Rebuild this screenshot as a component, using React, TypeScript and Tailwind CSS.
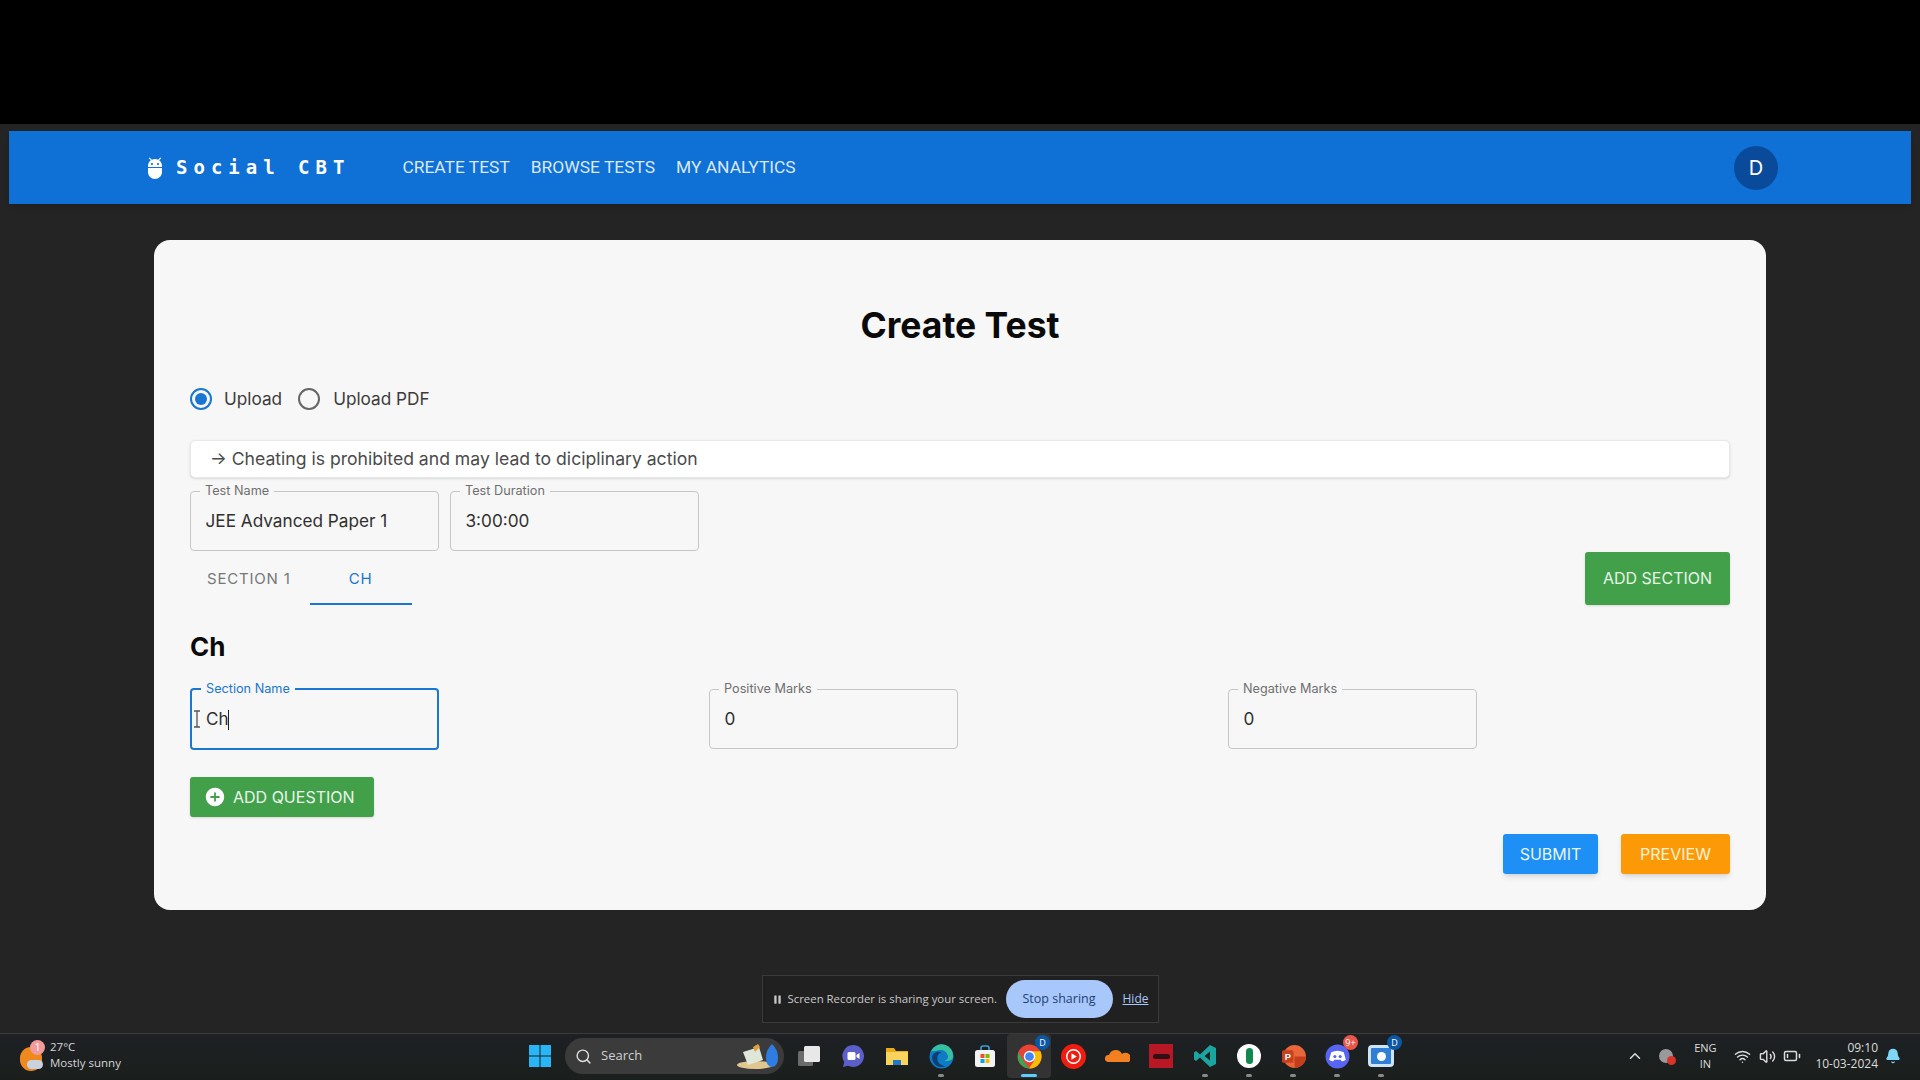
import type { ReactNode } from 'react';
import { Search, ChevronUp, Wifi, Volume2, BatteryLow, Bell, Pause } from 'lucide-react';

function Field({ label, value, width = 'w-[249px]' }: { label: string; value: string; width?: string }) {
  return (
    <fieldset className={`${width} h-[66px] rounded-[4px] border border-[#c6c6c6] px-[14.500px]`}>
      <legend className="ml-[-5.500px] px-[5px] text-[12.700px] leading-[12px] text-[#6f6f6f]">{label}</legend>
      <input
        readOnly
        value={value}
        className="w-full bg-transparent pt-[12px] text-[17.200px] leading-[24px] text-[#303030] outline-none"
      />
    </fieldset>
  );
}

function FocusedField({ label, value }: { label: string; value: string }) {
  return (
    <fieldset className="relative h-[67px] w-[249px] rounded-[4px] border-2 border-[#1976d2] px-[14px]">
      <legend className="ml-[-5px] px-[5px] text-[12.700px] leading-[12px] text-[#1976d2]">{label}</legend>
      <div className="mt-[13px] flex h-[24px] items-center text-[17px] text-[#303030]">
        {value}
        <span className="h-[20px] w-px bg-[#222]" />
      </div>
      {/* mouse pointer from the recording */}
      <svg viewBox="0 0 8 18" className="absolute left-[1px] top-[15px] h-[18px] w-[8px]">
        <path d="M1 1h6M1 17h6M4 1v16" stroke="#555" strokeWidth="1.3" fill="none" />
      </svg>
    </fieldset>
  );
}

function TaskIcon({ children, active, dot }: { children: ReactNode; active?: boolean; dot?: boolean }) {
  return (
    <div className={`relative flex h-[44px] w-[44px] items-center justify-center rounded-[4px] ${active ? 'bg-[#333]' : ''}`}>
      {children}
      {dot && <span className={`absolute bottom-[1px] h-[3px] rounded-full ${active ? 'w-[16px] bg-[#60cdff]' : 'w-[6px] bg-[#8a8a8a]'}`} />}
    </div>
  );
}

function Badge({ text, color }: { text: string; color: string }) {
  return (
    <span className={`absolute right-[1px] top-[1px] flex h-[15px] min-w-[15px] items-center justify-center rounded-full text-[9px] text-white ${color}`}>
      {text}
    </span>
  );
}

function Taskbar() {
  return (
    <div className="relative flex h-[48px] items-center border-t border-[#3a3a3a] bg-gradient-to-b from-[#1e2024] to-[#1a1f1c] font-['Open_Sans',sans-serif]">
      {/* weather */}
      <div className="absolute left-[19px] top-[4px] flex items-center gap-[5px]">
        <div className="relative h-[34px] w-[26px]">
          <div className="absolute left-[1px] top-[9px] h-[24px] w-[22px] rounded-full bg-[#ee8a1d]" />
          <div className="absolute left-[8px] top-[22px] h-[9px] w-[16px] rounded-full bg-[#c9d3df]" />
          <span className="absolute left-[11px] top-[2px] flex h-[15px] w-[15px] items-center justify-center rounded-full bg-[#f39b9b] text-[10px] text-white">1</span>
        </div>
        <div className="text-[11.500px] leading-[16px] text-[#d5d5d5]">
          <div>27°C</div>
          <div>Mostly sunny</div>
        </div>
      </div>

      {/* centred apps */}
      <div className="absolute left-[518px] top-0 flex items-center">
        <TaskIcon>
          <svg viewBox="0 0 24 24" className="h-[24px] w-[24px]">
            <path fill="#29b6f6" d="M1 1h10.500v10.500H1zM12.500 1H23v10.500H12.500zM1 12.500h10.500V23H1zM12.500 12.500H23V23H12.500z" />
          </svg>
        </TaskIcon>
        <div className="mx-[3px] flex h-[36px] w-[219px] items-center rounded-full bg-[#3b3b3b] pl-[10px] text-[13px] text-[#d0d0d0]">
          <Search size={17} strokeWidth={2} className="text-[#e0e0e0]" />
          <span className="ml-[9px]">Search</span>
          <svg viewBox="0 0 46 28" className="ml-auto mr-[3px] h-[28px] w-[46px]">
            <ellipse cx="20" cy="23" rx="18" ry="4" fill="#e2c690" />
            <path fill="#dfe8d8" d="M8 10l16-5 4 13-15 5z" />
            <path fill="#e0a040" d="M18 5l5-3 2 3-5 5z" />
            <path fill="#2f7de1" d="M37 2c3 3 6 7 6 14 0 6-3 9-6 9s-6-3-6-9c0-7 3-11 6-14z" />
          </svg>
        </div>
        <TaskIcon>
          <svg viewBox="0 0 24 24" className="h-[24px] w-[24px]">
            <rect x="1" y="7" width="15" height="15" rx="1.500" fill="#6b6b6b" />
            <rect x="7" y="2" width="16" height="16" rx="1.500" fill="#e8e8e8" />
          </svg>
        </TaskIcon>
        <TaskIcon>
          <svg viewBox="0 0 24 24" className="h-[24px] w-[24px]">
            <path fill="#5b5fc7" d="M12 1a11 11 0 1 1-5 20.800L2 23l1.200-5A11 11 0 0 1 12 1z" />
            <rect x="6.500" y="8" width="8" height="8" rx="1.500" fill="#fff" />
            <path fill="#fff" d="M15.500 11l3-2v6l-3-2z" />
          </svg>
        </TaskIcon>
        <TaskIcon>
          <svg viewBox="0 0 24 24" className="h-[24px] w-[24px]">
            <path fill="#e9ab17" d="M1 4h8l2 3h12v14H1z" />
            <path fill="#f8d45c" d="M1 8h22v13H1z" />
            <path fill="#1f78c8" d="M8 21v-5h8v5z" />
          </svg>
        </TaskIcon>
        <TaskIcon dot>
          <svg viewBox="0 0 24 24" className="h-[25px] w-[25px]">
            <circle cx="12" cy="12" r="11.500" fill="#0f7ac6" />
            <path fill="#35c1a0" d="M2 7a11 11 0 0 1 21 6c-1 3-5 4-8 3 3-1 4-3 3-5-1-4-5-6-9-5-3 .500-5 1-7 1z" />
            <path fill="#0c3f74" d="M8 14c0 4 3 7 8 7-6 3-13-1-13-8 0-4 5-7 9-5-3 1-4 3-4 6z" />
          </svg>
        </TaskIcon>
        <TaskIcon>
          <svg viewBox="0 0 24 24" className="h-[24px] w-[24px]">
            <rect x="2" y="6" width="20" height="17" rx="2.500" fill="#f3f3f3" />
            <path d="M8 6V4a2 2 0 0 1 2-2h4a2 2 0 0 1 2 2v2" stroke="#3aa0d8" strokeWidth="1.600" fill="none" />
            <rect x="7.500" y="10" width="4" height="4" fill="#f25022" />
            <rect x="12.500" y="10" width="4" height="4" fill="#7fba00" />
            <rect x="7.500" y="15" width="4" height="4" fill="#00a4ef" />
            <rect x="12.500" y="15" width="4" height="4" fill="#ffb900" />
          </svg>
        </TaskIcon>
        <TaskIcon active dot>
          <svg viewBox="0 0 24 24" className="h-[25px] w-[25px]">
            <circle cx="12" cy="12" r="11.500" fill="#ea4335" />
            <path fill="#34a853" d="M1.500 8L7 17.500 12 23.500A11.500 11.500 0 0 1 1.500 8z" />
            <path fill="#fbbc05" d="M12 7h10.500a11.500 11.500 0 0 1-11 16.500L17 15z" />
            <circle cx="12" cy="12" r="5.500" fill="#fff" />
            <circle cx="12" cy="12" r="4.200" fill="#4285f4" />
          </svg>
          <Badge text="D" color="bg-[#0b57a4]" />
        </TaskIcon>
        <TaskIcon>
          <svg viewBox="0 0 24 24" className="h-[25px] w-[25px]">
            <circle cx="12" cy="12" r="12" fill="#f01c10" />
            <circle cx="12" cy="12" r="6.500" fill="none" stroke="#fff" strokeWidth="1.400" />
            <path fill="#fff" d="M10 8.800l5.200 3.200-5.200 3.200z" />
          </svg>
        </TaskIcon>
        <TaskIcon>
          <svg viewBox="0 0 26 14" className="h-[14px] w-[26px]">
            <path fill="#f38020" d="M4 13a3.500 3.500 0 0 1 1-7 7 7 0 0 1 13-1 5 5 0 0 1 7 8z" />
          </svg>
        </TaskIcon>
        <TaskIcon>
          <div className="flex h-[24px] w-[24px] items-center justify-center bg-[#b81826]">
            <div className="h-[5px] w-[17px] rounded-full bg-[#301012]" />
          </div>
        </TaskIcon>
        <TaskIcon dot>
          <svg viewBox="0 0 24 24" className="h-[24px] w-[24px]">
            <path fill="#1aa5a0" d="M17 1l6 3v16l-6 3-10-9.500L3 17l-2-1.500V8.500L3 7l4 3.500zM17 7.500L11.500 12l5.500 4.500z" />
          </svg>
        </TaskIcon>
        <TaskIcon dot>
          <div className="flex h-[24px] w-[24px] items-center justify-center rounded-full bg-white">
            <div className="h-[16px] w-[7px] rounded-full bg-[#0f8a4c]" />
          </div>
        </TaskIcon>
        <TaskIcon dot>
          <svg viewBox="0 0 24 24" className="h-[25px] w-[25px]">
            <circle cx="13" cy="12" r="11" fill="#e8663a" />
            <path fill="#c43e1c" d="M13 12h11a11 11 0 0 1-11 11z" />
            <rect x="1" y="6" width="11" height="12" rx="1.500" fill="#c9401c" />
            <text x="3.500" y="15.500" fontSize="9" fill="#fff" fontFamily="Arial, sans-serif" fontWeight="700">P</text>
          </svg>
        </TaskIcon>
        <TaskIcon dot>
          <svg viewBox="0 0 24 24" className="h-[25px] w-[25px]">
            <circle cx="12" cy="12" r="11.500" fill="#5865f2" />
            <path fill="#fff" d="M6 8c4-2 8-2 12 0l2 7c-1.500 1-3 1.500-4 1.500l-1-1.500H9l-1 1.500c-1 0-2.500-.500-4-1.500z" />
            <circle cx="9.500" cy="12" r="1.500" fill="#5865f2" />
            <circle cx="14.500" cy="12" r="1.500" fill="#5865f2" />
          </svg>
          <Badge text="9+" color="bg-[#e8574a]" />
        </TaskIcon>
        <TaskIcon dot>
          <div className="flex h-[22px] w-[26px] items-center justify-center rounded-[4px] border-[3px] border-[#cfe3f7] bg-[#2f7fd6]">
            <div className="h-[9px] w-[9px] rounded-full bg-white" />
          </div>
          <Badge text="D" color="bg-[#0b57a4]" />
        </TaskIcon>
      </div>

      {/* tray */}
      <div className="ml-auto flex h-full items-center pb-[3px] pr-[19px] text-[#dcdcdc]">
        <ChevronUp size={18} />
        <div className="relative ml-[15px] h-[14px] w-[14px] rounded-full bg-[#9a9a9a]">
          <span className="absolute bottom-[-2px] right-[-3px] h-[9px] w-[9px] rounded-full bg-[#d8342c]" />
        </div>
        <div className="ml-[17px] w-[30px] text-center text-[11px] leading-[16px]">
          <div>ENG</div>
          <div>IN</div>
        </div>
        <Wifi size={17} className="ml-[14px]" />
        <Volume2 size={17} className="ml-[8px]" />
        <BatteryLow size={18} className="ml-[7px]" />
        <div className="ml-[14px] text-right text-[12px] leading-[16px]">
          <div>09:10</div>
          <div>10-03-2024</div>
        </div>
        <Bell size={16} fill="#7fd6f7" className="ml-[7px] text-[#7fd6f7]" />
      </div>
    </div>
  );
}

export default function App() {
  return (
    <div className="flex h-screen flex-col overflow-hidden bg-[#242424] font-['Inter',sans-serif]">
      <div className="h-[124px] shrink-0 bg-black" />

      <header className="mx-[9px] mt-[7px] flex h-[73px] shrink-0 items-center bg-[#0f70d6] pl-[134px] pr-[133px] text-white shadow-md">
        <svg viewBox="0 0 24 24" fill="currentColor" className="mr-[9px] h-[24px] w-[24px]">
          <path d="M5 16c0 3.870 3.130 7 7 7s7-3.130 7-7v-4H5v4zM16.120 4.370l2.100-2.100-.820-.830-2.300 2.310C14.160 3.280 13.120 3 12 3s-2.160.280-3.090.750L6.600 1.440l-.820.830 2.100 2.100C6.140 5.640 5 7.680 5 10v1h14v-1c0-2.320-1.140-4.360-2.880-5.630zM9 9c-.550 0-1-.450-1-1s.450-1 1-1 1 .450 1 1-.450 1-1 1zm6 0c-.550 0-1-.450-1-1s.450-1 1-1 1 .450 1 1-.450 1-1 1z" />
        </svg>
        <span className="font-['DejaVu_Sans_Mono',monospace] text-[19px] font-bold tracking-[6px]">Social CBT</span>
        <nav className="ml-[52px] flex gap-[21px] font-['Roboto',sans-serif] text-[17.400px] text-[#dbe8f8]">
          <span>CREATE TEST</span>
          <span>BROWSE TESTS</span>
          <span>MY ANALYTICS</span>
        </nav>
        <div className="ml-auto flex h-[44px] w-[44px] items-center justify-center rounded-full bg-[#0a4a9a] text-[20px]">D</div>
      </header>

      <main className="mx-[154px] mt-[36px] h-[670px] w-[1612px] shrink-0 rounded-[16px] bg-[#f7f7f7] px-[36px] pt-[64px]">
        <h1 className="text-center text-[35.500px] font-bold leading-[44px] text-[#0a0a0a]">Create Test</h1>

        <div className="mt-[39px] flex h-[24px] items-center text-[17.200px] text-[#3c3c3c]">
          <span className="flex h-[22px] w-[22px] items-center justify-center rounded-full border-2 border-[#1976d2]">
            <span className="h-[12px] w-[12px] rounded-full bg-[#1976d2]" />
          </span>
          <span className="ml-[12px]">Upload</span>
          <span className="ml-[16px] h-[22px] w-[22px] rounded-full border-2 border-[#666]" />
          <span className="ml-[13px]">Upload PDF</span>
        </div>

        <div className="mt-[29px] flex h-[38px] items-center rounded-[5px] border border-[#e6e8ea] bg-white pl-[19px] pt-[1px] text-[17.600px] text-[#4a4a4a] shadow-sm">
          → Cheating is prohibited and may lead to diciplinary action
        </div>

        <div className="mt-[7px] flex gap-[11px]">
          <Field label="Test Name" value="JEE Advanced Paper 1" />
          <Field label="Test Duration" value="3:00:00" />
        </div>

        <div className="mt-[1px] flex h-[53px] items-stretch justify-between">
          <div className="flex text-[15px] tracking-[0.800px]">
            <div className="flex w-[120px] items-center border-b-2 border-transparent pl-[17px] pt-[3px] text-[#777]">SECTION 1</div>
            <div className="flex w-[102px] items-center justify-center border-b-2 border-[#1976d2] pr-[1px] pt-[3px] text-[#1976d2]">CH</div>
          </div>
          <button className="w-[145px] rounded-[3px] bg-[#43a04a] pb-[2px] text-[16px] text-[#e6f5e6] shadow-sm">ADD SECTION</button>
        </div>

        <h2 className="mt-[27px] text-[26px] font-bold leading-[30px] text-[#0a0a0a]">Ch</h2>

        <div className="mt-[21px] grid grid-cols-[519px_519px_auto]">
          <FocusedField label="Section Name" value="Ch" />
          <Field label="Positive Marks" value="0" />
          <Field label="Negative Marks" value="0" />
        </div>

        <button className="mt-[27px] flex h-[40px] w-[184px] items-center rounded-[3px] bg-[#43a04a] pb-[1px] pl-[14px] text-[16px] text-[#eaf6ea] shadow-sm">
          <svg viewBox="0 0 24 24" fill="currentColor" className="mr-[7px] h-[22px] w-[22px] text-white">
            <path d="M12 2C6.480 2 2 6.480 2 12s4.480 10 10 10 10-4.480 10-10S17.520 2 12 2zm5 11h-4v4h-2v-4H7v-2h4V7h2v4h4v2z" />
          </svg>
          ADD QUESTION
        </button>

        <div className="mt-[17px] flex justify-end gap-[23px] text-[16px]">
          <button className="h-[40px] w-[95px] rounded-[3px] bg-[#1e90f5] text-[#e6f4ff] shadow-md">SUBMIT</button>
          <button className="h-[40px] w-[109px] rounded-[3px] bg-[#fb9a06] text-[#fff1d6] shadow-md">PREVIEW</button>
        </div>
      </main>

      {/* screen share notice */}
      <div className="mx-auto mt-[65px] flex h-[48px] w-[397px] shrink-0 items-center whitespace-nowrap border border-[#3a3a3a] bg-[#202020] pl-[9px] font-['Open_Sans',sans-serif] text-[11.400px] text-[#c9c9c9]">
        <Pause size={11} fill="currentColor" strokeWidth={0} />
        <span className="ml-[5px] w-[207px]">Screen Recorder is sharing your screen.</span>
        <span className="ml-[11px] flex h-[38px] w-[107px] items-center justify-center rounded-full bg-[#a8c7fa] text-[12.500px] font-medium text-[#1f3f77]">Stop sharing</span>
        <span className="ml-[10px] text-[12px] text-[#a8c7fa] underline">Hide</span>
      </div>

      <div className="mt-[10px] shrink-0">
        <Taskbar />
      </div>
    </div>
  );
}
